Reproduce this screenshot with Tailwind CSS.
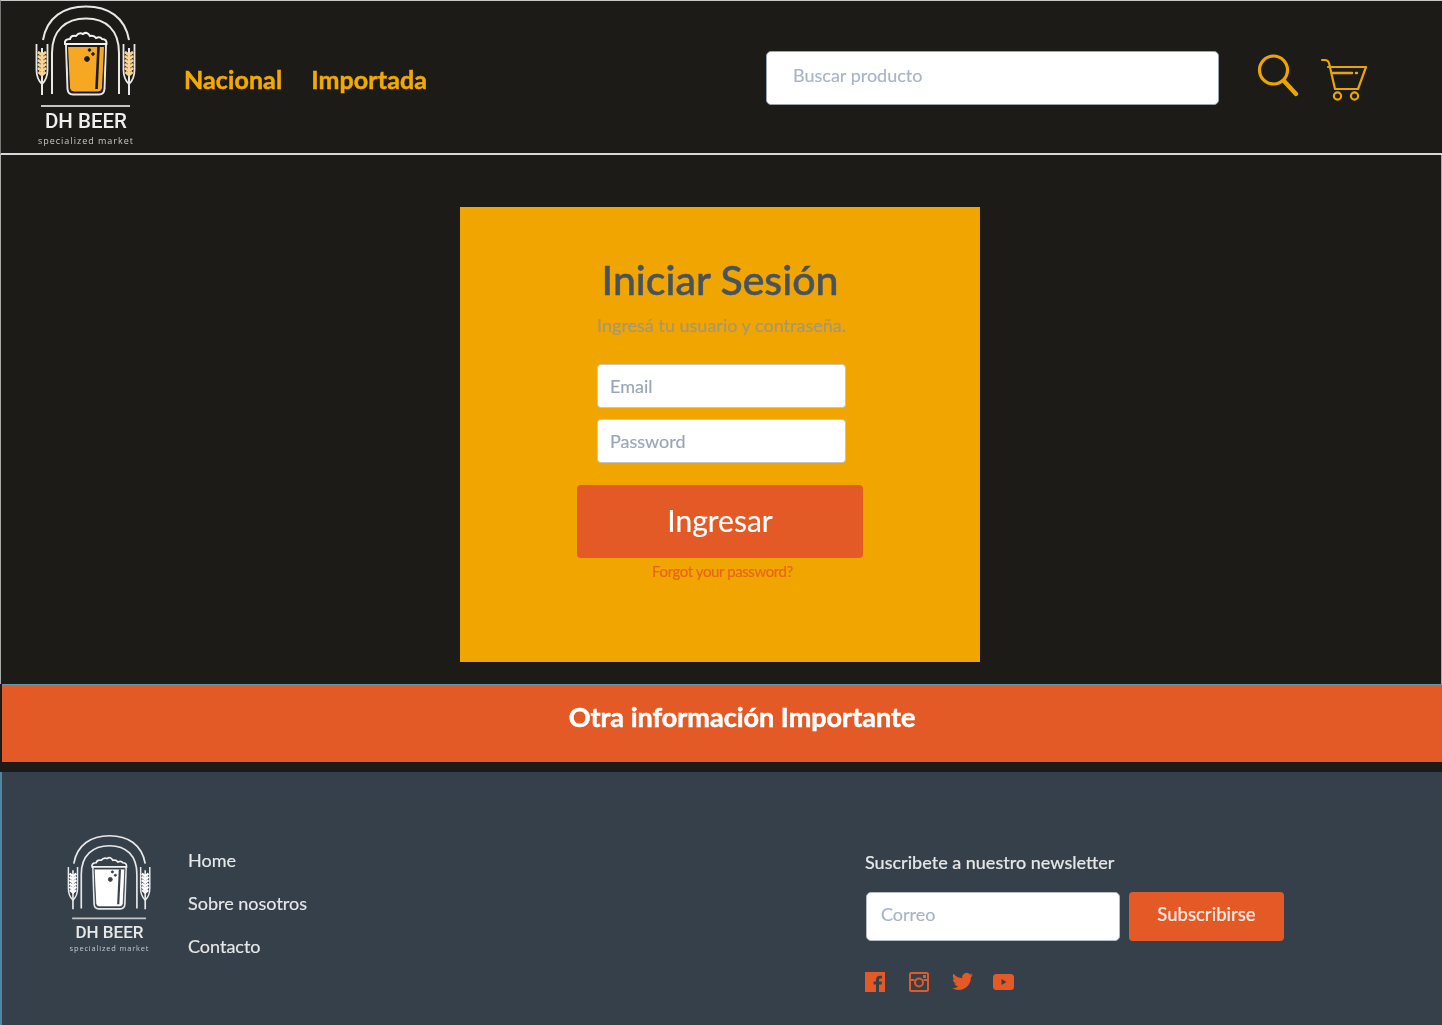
<!DOCTYPE html>
<html lang="es">
<head>
<meta charset="utf-8">
<title>DH Beer</title>
<script src="https://cdn.jsdelivr.net/npm/@tailwindcss/browser@4"></script>
</head>
<body class="bg-[#1c1b18]">
<svg width="0" height="0" class="absolute">
  <defs>
    <g id="wheat">
      <path d="M36.500 43V69Q36.500 78 42 83Q47.500 78 47.500 69V43" fill="none" stroke="#e8e8e8" stroke-width="1.800"/>
      <path d="M42 47V94" fill="none" stroke="#e8e8e8" stroke-width="2"/>
      <path d="M38 51l4 3l4-3M38 55l4 3l4-3M38 59l4 3l4-3M38 63l4 3l4-3M38 67l4 3l4-3M38.500 71l3.500 3l3.500-3" fill="none" stroke="currentColor" stroke-width="2.600"/>
      <path d="M38 51l4 3l4-3M38 55l4 3l4-3M38 59l4 3l4-3M38 63l4 3l4-3M38 67l4 3l4-3M38.500 71l3.500 3l3.500-3" fill="none" stroke="#fff" stroke-opacity="0.500" stroke-width="2.600"/>
    </g>
    <g id="mark">
      <path d="M43 39C47 16 64 5.500 86 5.500C108 5.500 125 16 129 39" fill="none" stroke="#e8e8e8" stroke-width="2"/>
      <path d="M52 93V52C52 29 66 17.500 86 17.500C106 17.500 119 29 119 52V93" fill="none" stroke="#e8e8e8" stroke-width="2"/>
      <use href="#wheat"/>
      <use href="#wheat" transform="translate(171 0) scale(-1 1)"/>
      <path d="M66 43L67.500 88Q68 93.500 73 93.500H99Q104 93.500 104.500 88L106 43" fill="none" stroke="#e8e8e8" stroke-width="2"/>
      <path d="M65 43Q64 38 70 38Q71 34 76 35Q79 31 83 33Q87 30 90 35Q94 34 96 37Q100 35 102 38Q107 38 106.500 43Z" fill="none" stroke="#f2f2f2" stroke-width="2"/>
      <path d="M67.500 45.500H104.500L102.500 87Q102 91 98 91H74Q70 91 69.500 87Z" fill="currentColor"/>
      <path d="M98.500 46L96.500 88" fill="none" stroke="inherit" stroke-width="2.600"/>
      <circle cx="87" cy="58" r="2.400"/>
      <circle cx="89.500" cy="49" r="1.300"/>
      <circle cx="93" cy="53" r="1.300"/>
      <path d="M41 105H130" fill="none" stroke="#c4c4c4" stroke-width="2.200"/>
    </g>
  </defs>
</svg>
<div class="w-[1442px] h-[1025px] overflow-hidden flex flex-col bg-[#1c1b18] blur-[0.7px] font-['Lato',sans-serif] [-webkit-text-stroke:0.15px]">

  <header class="h-[155px] shrink-0 flex items-start border-t border-t-[#c9c9c9] border-b-2 border-b-[#d9d9d9] border-l border-l-[#777]">
    <svg class="w-[112px] h-[150px] ml-[29px] shrink-0 text-[#f7a823] fill-[#1c1b18]" viewBox="30 0 112 150">
      <use href="#mark" stroke="#1c1b18"/>
      <text x="86" y="127" text-anchor="middle" font-size="20.500" font-weight="500" fill="#efefef" stroke="none" font-family="Roboto, sans-serif">DH BEER</text>
      <text x="86" y="143" text-anchor="middle" font-size="9" letter-spacing="1" fill="#c8c8c8" stroke="none" font-family="'Open Sans', sans-serif">specialized market</text>
    </svg>
    <nav class="ml-[42px] mt-[61px] flex gap-[29px] text-[25px] leading-[34px] font-bold tracking-[0.1px] text-[#f2a900] [-webkit-text-stroke:0.5px]">
      <a href="#">Nacional</a>
      <a href="#">Importada</a>
    </nav>
    <input class="ml-[339px] mt-[50px] w-[453px] h-[54px] bg-white rounded-[5px] border border-[#9aa3b2] pl-[26px] pb-[6px] text-[18px] placeholder:text-[#a9b4c6] outline-none" placeholder="Buscar producto">
    <svg class="ml-[38px] mt-[52px] w-[42px] h-[44px] shrink-0" viewBox="0 0 42 44" fill="none" stroke="#eba500">
      <circle cx="16.500" cy="17" r="14" stroke-width="3.200"/>
      <path d="M27 28L39 41" stroke-width="4.400" stroke-linecap="round"/>
    </svg>
    <svg class="ml-[21px] mt-[56px] w-[48px] h-[46px] shrink-0" viewBox="0 0 48 46" fill="none" stroke="#eba500" stroke-width="2.200" stroke-linecap="round" stroke-linejoin="round">
      <path d="M2 3H5Q8 3 9 6L15 32H38L46 10H8"/>
      <path d="M12 16H32" stroke-width="2.400"/>
      <path d="M36 16H37" stroke-width="2.400"/>
      <circle cx="17.500" cy="39" r="3.600"/>
      <circle cx="34.500" cy="39" r="3.600"/>
    </svg>
  </header>

  <main class="h-[529px] shrink-0 pt-[52px] border-x border-x-[#aaa]">
    <section class="ml-[459px] w-[520px] h-[455px] bg-[#f0a500] flex flex-col items-center pt-[48px]">
      <h1 class="text-[41px] leading-[50px] font-medium text-[#46535f] [-webkit-text-stroke:0.5px]">Iniciar Sesión</h1>
      <p class="mt-[7px] ml-[3px] text-[18px] leading-[26px] text-[#a0987a]">Ingresá tu usuario y contraseña.</p>
      <input class="block mt-[26px] ml-[3px] w-[249px] h-[44px] bg-white rounded-[4px] border border-[#c5c5c5] pl-[12px] text-[18px] placeholder:text-[#9aa5b8] outline-none" placeholder="Email">
      <input class="block mt-[11px] ml-[3px] w-[249px] h-[44px] bg-white rounded-[4px] border border-[#c5c5c5] pl-[12px] text-[18px] placeholder:text-[#9aa5b8] outline-none" placeholder="Password">
      <button class="mt-[22px] w-[286px] h-[73px] bg-[#e45a26] rounded-[4px] text-white text-[30px] pb-[2px]">Ingresar</button>
      <a href="#" class="mt-[3px] ml-[5px] text-[15px] leading-[20px] tracking-[-0.4px] text-[#e9641c]">Forgot your password?</a>
    </section>
  </main>

  <div class="ml-[2px] h-[78px] shrink-0 bg-[#e45a26] border-t border-t-[#5f9bb0] flex items-center justify-center pl-[40px] pb-[13px]">
    <h2 class="text-[27px] leading-[34px] font-bold text-white [-webkit-text-stroke:0.5px]">Otra información Importante</h2>
  </div>
  <div class="h-[10px] shrink-0 ml-[2px]"></div>

  <footer class="flex-1 bg-[#36404b] border-l-2 border-l-[#4f86a6] flex items-start">
    <svg class="w-[93px] h-[125px] ml-[61px] mt-[59px] shrink-0 text-white fill-[#36404b]" viewBox="30 0 112 150">
      <use href="#mark" stroke="#36404b"/>
      <text x="86" y="128" text-anchor="middle" font-size="20.500" font-weight="500" fill="#e8e8e8" stroke="none" font-family="Roboto, sans-serif">DH BEER</text>
      <text x="86" y="144" text-anchor="middle" font-size="9" letter-spacing="1" fill="#c4c8cc" stroke="none" font-family="'Open Sans', sans-serif">specialized market</text>
    </svg>
    <ul class="ml-[32px] mt-[76px] flex flex-col gap-[19px] text-[18px] leading-[24px] text-[#e8e8e8] w-[200px] shrink-0">
      <li><a href="#">Home</a></li>
      <li><a href="#">Sobre nosotros</a></li>
      <li><a href="#">Contacto</a></li>
    </ul>
    <div class="ml-[477px] mt-[77px] w-[430px] shrink-0">
      <p class="text-[18px] leading-[26px] font-medium text-[#e5e5e5]">Suscribete a nuestro newsletter</p>
      <form class="mt-[17px] flex gap-[9px] ml-[1px]">
        <input class="w-[254px] h-[49px] bg-white rounded-[5px] border border-[#b7bcc4] pl-[14px] pb-[5px] text-[18px] placeholder:text-[#a9b4c6] outline-none" placeholder="Correo">
        <button type="button" class="w-[155px] h-[49px] bg-[#e45a26] rounded-[4px] text-[#fbe9e0] text-[18.500px] font-medium pb-[3px]">Subscribirse</button>
      </form>
      <div class="mt-[30px] flex items-center text-[#e45a26]">
        <svg class="w-[20px] h-[20px]" viewBox="0 0 20 20" fill="currentColor"><path d="M0 0H20V20H14V12.500H16.600L17 9.500H14V8C14 7 14.300 6.500 15.500 6.500H17V3.900C16.700 3.900 15.800 3.800 14.800 3.800C12.600 3.800 11 5.100 11 7.500V9.500H8.500V12.500H11V20H0Z"/></svg>
        <svg class="w-[20px] h-[20px] ml-[24px]" viewBox="0 0 20 20" fill="none" stroke="currentColor"><rect x="1" y="1" width="18" height="18" rx="1.500" stroke-width="2"/><path d="M1 8H5.500M14.500 8H19" stroke-width="2"/><circle cx="10" cy="10.500" r="4" stroke-width="2"/><rect x="14" y="3" width="3" height="3" fill="currentColor" stroke="none"/></svg>
        <svg class="w-[21px] h-[21px] ml-[23px]" viewBox="0 0 24 24" fill="currentColor"><path d="M23.953 4.570a10 10 0 01-2.825.775 4.958 4.958 0 002.163-2.723c-.951.555-2.005.959-3.127 1.184a4.920 4.920 0 00-8.384 4.482C7.690 8.095 4.067 6.130 1.640 3.162a4.822 4.822 0 00-.666 2.475c0 1.710.870 3.213 2.188 4.096a4.904 4.904 0 01-2.228-.616v.060a4.923 4.923 0 003.946 4.827 4.996 4.996 0 01-2.212.085 4.936 4.936 0 004.604 3.417 9.867 9.867 0 01-6.102 2.105c-.390 0-.779-.023-1.170-.067a13.995 13.995 0 007.557 2.209c9.053 0 13.998-7.496 13.998-13.985 0-.210 0-.420-.015-.630A9.935 9.935 0 0024 4.590z"/></svg>
        <svg class="w-[21px] h-[16px] ml-[20px]" viewBox="0 0 21 16"><rect width="21" height="16" rx="3.500" fill="currentColor"/><path d="M8.500 5L13.500 8L8.500 11Z" fill="#36404b"/></svg>
      </div>
    </div>
  </footer>
</div>
</body>
</html>
